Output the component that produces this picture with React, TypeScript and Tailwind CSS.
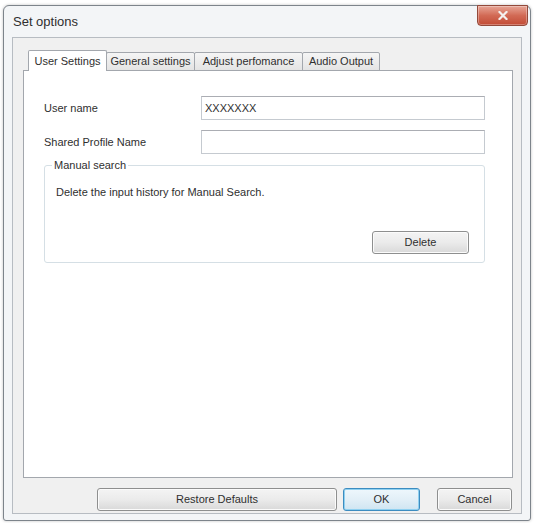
import React from "react";

const font = "font-['Liberation_Sans',Arial,sans-serif]";

function Tab({ label, width, active }: { label: string; width: string; active?: boolean }) {
  if (active) {
    return (
      <div
        className={`relative z-20 ${width} h-[21px] flex items-center justify-center bg-white border border-b-0 border-[#a3a7ad] rounded-t-[2px] text-[11px] text-[#2f2f2f]`}
      >
        {label}
      </div>
    );
  }
  return (
    <div
      className={`relative z-10 -ml-px ${width} h-[19px] flex items-center justify-center bg-gradient-to-b from-[#f5f5f5] to-[#e4e4e4] border border-[#a3a7ad] rounded-t-[2px] text-[11px] text-[#2f2f2f]`}
    >
      {label}
    </div>
  );
}

function Button({ label, width, primary }: { label: string; width: string; primary?: boolean }) {
  return (
    <button
      className={`${width} h-[23px] rounded-[3px] border text-[11px] text-[#2f2f2f] flex items-center justify-center ${
        primary
          ? "border-[#3c8cc0] bg-gradient-to-b from-[#eef7fc] via-[#e2eff7] to-[#cfe5f2] shadow-[inset_0_0_0_1px_#8fd0f0]"
          : "border-[#8e8f8f] bg-gradient-to-b from-[#f4f4f4] via-[#ebebeb] to-[#d9d9d9] shadow-[inset_0_0_0_1px_#fbfbfb]"
      }`}
    >
      {label}
    </button>
  );
}

export default function App() {
  return (
    <div className={`w-[534px] h-[523px] bg-white pt-[5px] pl-[3px] ${font}`}>
      {/* window frame */}
      <div className="w-[528px] h-[516px] flex flex-col border border-[#7d848b] rounded-t-[6px] rounded-b-[3px] bg-[#f3f5f7] px-[8px] pb-[6px] shadow-[0_0_3px_rgba(0,0,0,0.25)]">
        {/* title bar */}
        <div className="h-[31px] flex items-start justify-between">
          <span className="ml-[1px] mt-[8px] text-[13px] leading-[15px] text-[#2f2f2f]">Set options</span>
          <button className="-mt-px -mr-[6px] w-[51px] h-[21px] flex items-center justify-center rounded-b-[4px] border border-[#93493a] bg-gradient-to-b from-[#e7a596] via-[#d26a55] to-[#c24b35] shadow-[inset_0_0_0_1px_rgba(255,255,255,0.3)]">
            <svg width="10" height="9" viewBox="0 0 10 9">
              <path d="M1.5 1 L8.5 8 M8.5 1 L1.5 8" stroke="#f4f0ee" strokeWidth="2.2" strokeLinecap="square" />
            </svg>
          </button>
        </div>

        {/* client area */}
        <div className="flex-1 flex flex-col border border-[#b7bcc2] bg-[#f0f0f0] pl-[10px] pr-[8px] pt-[12px] pb-[2px]">
          {/* tabs */}
          <div className="relative z-10 h-[21px] flex items-end pl-[5px]">
            <Tab label="User Settings" width="w-[79px]" active />
            <Tab label="General settings" width="w-[89px]" />
            <Tab label="Adjust perfomance" width="w-[109px]" />
            <Tab label="Audio Output" width="w-[78px]" />
          </div>

          {/* tab page */}
          <div className="-mt-px flex-1 bg-white border border-[#a3a7ad] pl-[20px] pr-[27px] pt-[25px]">
            <div className="h-[24px] flex items-center">
              <span className="w-[157px] text-[11px] text-[#2f2f2f]">User name</span>
              <div className="flex-1 h-full flex items-center px-[3px] border border-[#c5cad0] border-t-[#abadb3] bg-white text-[11px] text-[#2f2f2f]">
                XXXXXXX
              </div>
            </div>
            <div className="mt-[10px] h-[24px] flex items-center">
              <span className="w-[157px] text-[11px] text-[#2f2f2f]">Shared Profile Name</span>
              <div className="flex-1 h-full border border-[#c5cad0] border-t-[#abadb3] bg-white" />
            </div>

            {/* group box */}
            <div className="mt-[11px] h-[98px] flex flex-col border border-[#d5dfe5] rounded-[3px] pl-[11px] pr-[15px]">
              <span className="-mt-[8px] -ml-[4px] self-start bg-white px-[2px] text-[11px] leading-[14px] text-[#2f2f2f]">
                Manual search
              </span>
              <p className="mt-[13px] text-[11px] leading-[14px] text-[#2f2f2f]">
                Delete the input history for Manual Search.
              </p>
              <div className="mt-[32px] flex justify-end">
                <Button label="Delete" width="w-[97px]" />
              </div>
            </div>
          </div>

          {/* dialog buttons */}
          <div className="mt-[10px] flex justify-end pr-[1px]">
            <Button label="Restore Defaults" width="w-[240px]" />
            <div className="w-[6px]" />
            <Button label="OK" width="w-[77px]" primary />
            <div className="w-[17px]" />
            <Button label="Cancel" width="w-[75px]" />
          </div>
        </div>
      </div>
    </div>
  );
}
